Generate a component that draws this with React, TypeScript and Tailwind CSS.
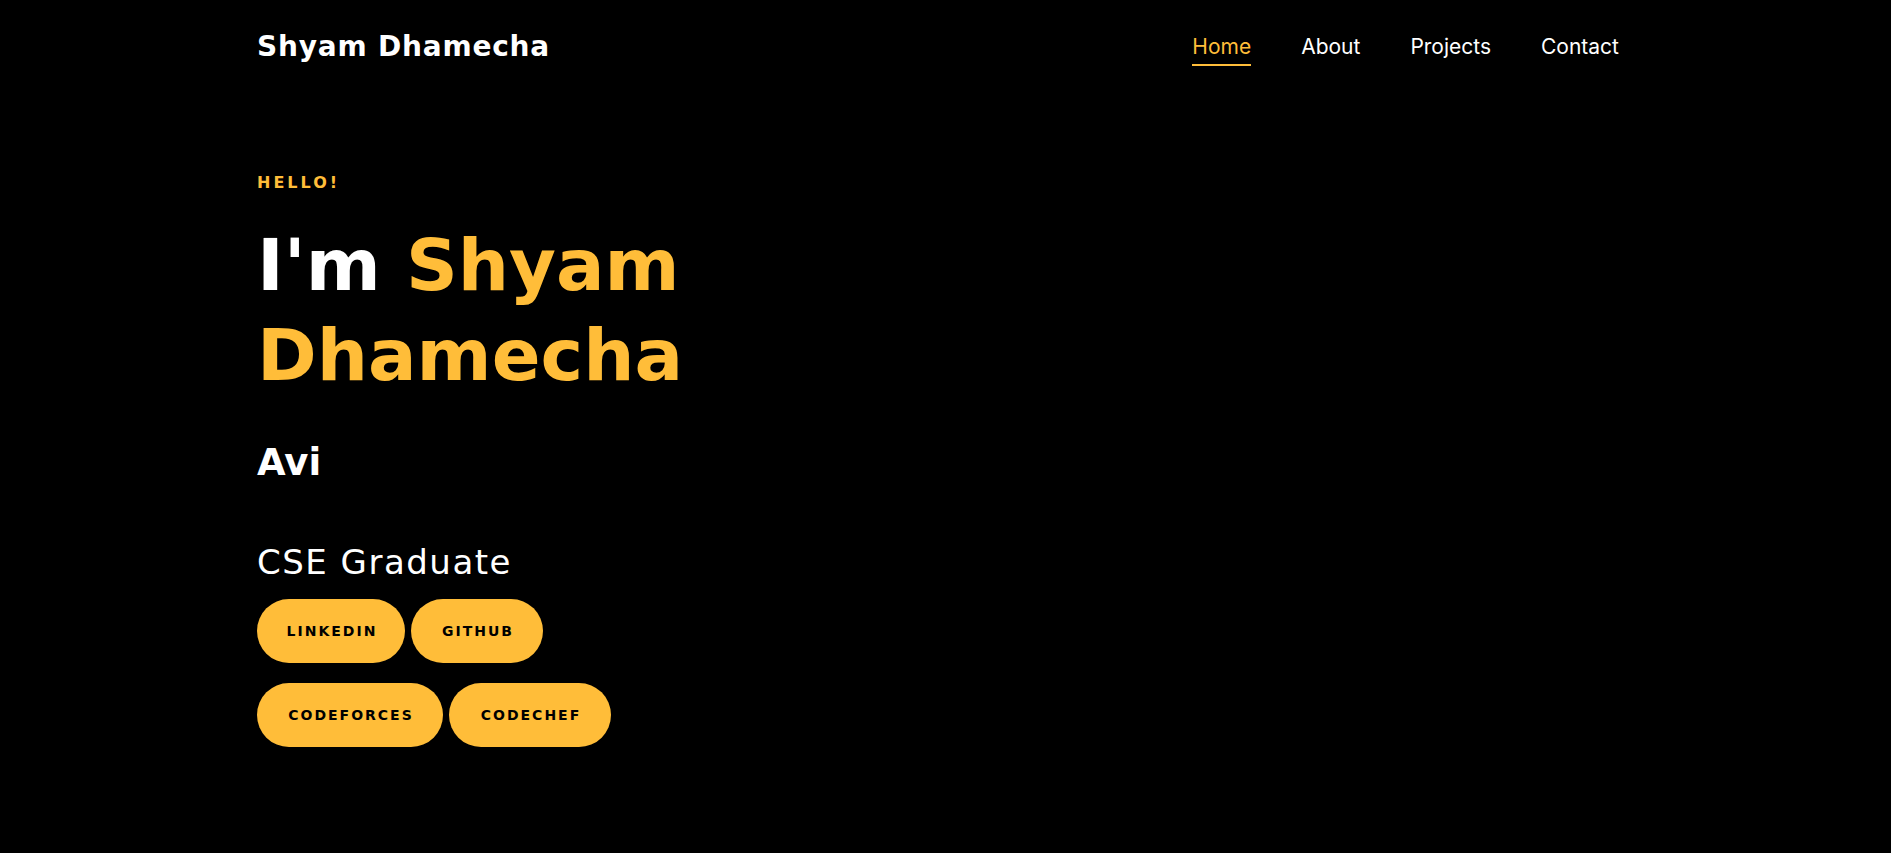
const NAV = ['Home', 'About', 'Projects', 'Contact'];
const LINKS: [string, string][][] = [
  [
    ['LinkedIn', 'w-[148px]'],
    ['GitHub', 'w-[132px]'],
  ],
  [
    ['Codeforces', 'w-[186px]'],
    ['CodeChef', 'w-[162px]'],
  ],
];

function Header() {
  return (
    <header className="flex items-start justify-between pt-[33px]">
      <a className="font-['DejaVu_Sans',sans-serif] text-[28px] leading-[28px] font-bold tracking-[0.8px] text-white">
        Shyam Dhamecha
      </a>
      <nav className="mr-[15px] flex items-start gap-[50px]">
        {NAV.map((item, i) => (
          <a
            key={item}
            className={
              i === 0
                ? "border-b-2 border-[#ffbd39] pb-[3px] font-['Inter',sans-serif] text-[21px] leading-[28px] text-[#ffbd39]"
                : "border-b-2 border-transparent pb-[3px] font-['Inter',sans-serif] text-[21px] leading-[28px] text-white"
            }
          >
            {item}
          </a>
        ))}
      </nav>
    </header>
  );
}

export default function App() {
  return (
    <div className="min-h-screen bg-black">
      <div className="mx-auto w-[1377px]">
        <Header />
        <section className="font-['DejaVu_Sans',sans-serif]">
          <p className="mt-[109px] text-[16px] leading-[16px] font-bold tracking-[3px] text-[#ffbd39]">
            HELLO!
          </p>
          <h1 className="mt-[29px] text-[72px] leading-[90px] font-bold">
            <span className="block">
              <span className="text-white">I'm </span>
              <span className="text-[#ffbd39]">Shyam</span>
            </span>
            <span className="block text-[#ffbd39]">Dhamecha</span>
          </h1>
          <h2 className="mt-[44px] text-[37px] leading-[37px] font-bold text-white">Avi</h2>
          <h3 className="mt-[65px] text-[34px] leading-[33px] tracking-[1.5px] text-white">
            CSE Graduate
          </h3>
          <div className="mt-[20px] flex flex-col gap-[20px]">
            {LINKS.map(row => (
              <div key={row[0][0]} className="flex gap-[6px]">
                {row.map(([label, w]) => (
                  <a
                    key={label}
                    className={`flex h-16 items-center justify-center rounded-full bg-[#ffbd39] pl-[2px] text-[14px] font-bold tracking-[2px] text-black uppercase ${w}`}
                  >
                    {label}
                  </a>
                ))}
              </div>
            ))}
          </div>
        </section>
      </div>
    </div>
  );
}
